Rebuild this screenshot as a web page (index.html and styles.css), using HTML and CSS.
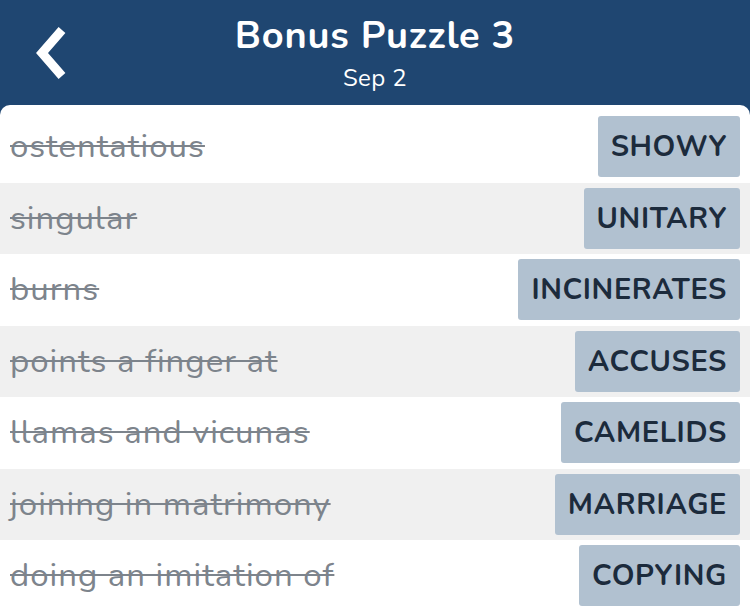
FILE: index.html
```html
<!DOCTYPE html>
<html lang="en">
<head>
    <meta charset="UTF-8">
    <meta name="viewport" content="width=device-width, initial-scale=1.0">
    <title>Bonus Puzzle 3</title>
    <link rel="stylesheet" href="styles.css">
</head>
<body>
    <div class="header">
        <a class="back" href="#">
            <svg width="40" height="56" viewBox="0 0 40 56">
                <polyline points="30,5 10,28 30,51" fill="none" stroke="#fff" stroke-width="9" stroke-linecap="butt" stroke-linejoin="miter"/>
            </svg>
        </a>
        <div class="titles">
            <h1>Bonus Puzzle 3</h1>
            <div class="date">Sep 2</div>
        </div>
    </div>
    <div class="list">
        <div class="row">
            <span class="clue">ostentatious</span>
            <span class="answer">SHOWY</span>
        </div>
        <div class="row">
            <span class="clue">singular</span>
            <span class="answer">UNITARY</span>
        </div>
        <div class="row">
            <span class="clue">burns</span>
            <span class="answer">INCINERATES</span>
        </div>
        <div class="row">
            <span class="clue">points a finger at</span>
            <span class="answer">ACCUSES</span>
        </div>
        <div class="row">
            <span class="clue">llamas and vicunas</span>
            <span class="answer">CAMELIDS</span>
        </div>
        <div class="row">
            <span class="clue">joining in matrimony</span>
            <span class="answer">MARRIAGE</span>
        </div>
        <div class="row">
            <span class="clue">doing an imitation of</span>
            <span class="answer">COPYING</span>
        </div>
    </div>
</body>
</html>
```

FILE: styles.css
```css
*{
    margin: 0;
    padding: 0;
    box-sizing: border-box;
    font-family: "Nunito", "Lato", sans-serif;
}

body{
    background-color: #1f4671;
    width: 750px;
    height: 611px;
    overflow: hidden;
}

.header{
    height: 105px;
    display: flex;
    align-items: center;
    position: relative;
}

.back{
    position: absolute;
    left: 32px;
    top: 25px;
    display: block;
}

.titles{
    flex: 1;
    text-align: center;
    color: white;
    padding-top: 2px;
}

h1{
    font-size: 38px;
    font-weight: 700;
    letter-spacing: 0.8px;
    line-height: 44px;
}

.date{
    font-size: 24px;
    letter-spacing: 0.4px;
    line-height: 32px;
    margin-top: 4px;
}

.list{
    background-color: white;
    border-radius: 10px 10px 0 0;
    padding-top: 6px;
    min-height: 506px;
}

.row{
    display: flex;
    align-items: center;
    justify-content: space-between;
    height: 71.5px;
    padding: 0 10px;
}

.row:nth-child(even){
    background-color: #f0f0f0;
}

.clue{
    color: #7d848c;
    font-size: 33px;
    letter-spacing: 1px;
    text-decoration: line-through;
    text-decoration-thickness: 2px;
}

.answer{
    background-color: #b1c1d0;
    color: #1c2b3c;
    font-size: 29px;
    font-weight: 700;
    letter-spacing: 0.6px;
    height: 61px;
    line-height: 61px;
    padding: 0 13px;
    border-radius: 3px;
}
```
